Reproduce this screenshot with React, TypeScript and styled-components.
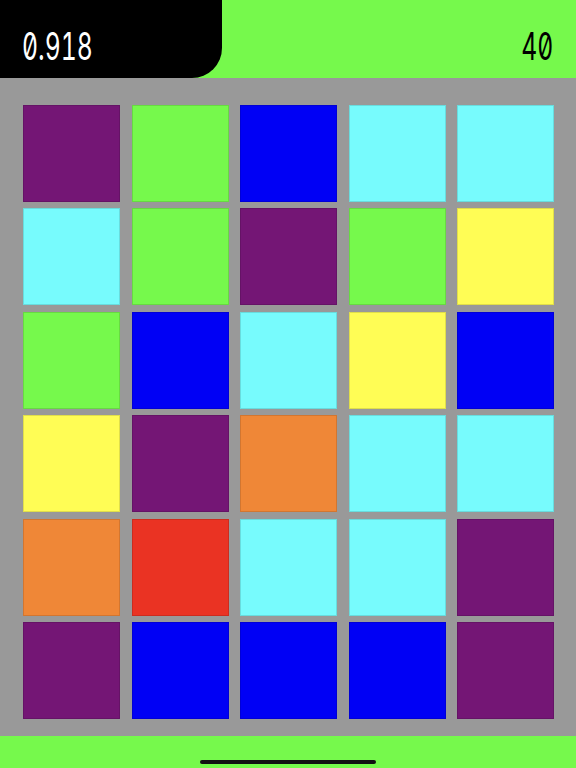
import React from 'react';
import styled, { createGlobalStyle } from 'styled-components';

const GlobalStyle = createGlobalStyle`
  html, body {
    margin: 0;
    padding: 0;
    background: #999999;
  }
  body {
    font-family: Inter, "DejaVu Sans", sans-serif;
  }
`;

const colors: Record<string, string> = {
  P: '#741675',
  G: '#76f94c',
  B: '#0000f5',
  C: '#77fbfd',
  Y: '#fffd55',
  O: '#ef8737',
  R: '#ea3323',
};

const board = [
  'PGBCC',
  'CGPGY',
  'GBCYB',
  'YPOCC',
  'ORCCP',
  'PBBBP',
];

function App() {
  return (
    <>
      <GlobalStyle />
      <Screen>
        <Header>
          <Timer>
            <Num>0.918</Num>
          </Timer>
          <Score>
            <Num>40</Num>
          </Score>
        </Header>
        <Board>
          <Grid>
            {board.map((row, r) =>
              row.split('').map((c, i) => <Tile key={r + '-' + i} color={colors[c]} />)
            )}
          </Grid>
        </Board>
        <Footer>
          <HomeBar />
        </Footer>
      </Screen>
    </>
  );
}

export default App;

const Screen = styled.div`
  width: 576px;
  height: 768px;
  display: flex;
  flex-direction: column;
  overflow: hidden;
`;

const Header = styled.div`
  height: 78px;
  background: #76f94c;
  display: flex;
  justify-content: space-between;
  align-items: stretch;
`;

const Timer = styled.div`
  width: 222px;
  background: #000;
  border-bottom-right-radius: 30px;
  color: #fff;
  display: flex;
  align-items: center;
  padding-left: 22px;
  box-sizing: border-box;
  padding-top: 13px;
`;

const Score = styled.div`
  color: #000;
  display: flex;
  align-items: center;
  padding-right: 23px;
  padding-top: 13px;
`;

const Num = styled.span`
  display: inline-block;
  font-family: Inter, "DejaVu Sans", sans-serif;
  font-feature-settings: "zero" 1, "tnum" 1;
  font-size: 38px;
  font-weight: 400;
  letter-spacing: 0;
  transform: scaleX(0.65);
  transform-origin: left center;
  line-height: 1;
  ${Score} & {
    transform-origin: right center;
  }
`;

const Board = styled.div`
  flex: 1;
  background: #999999;
  padding: 27px 23px 0 23px;
`;

const Grid = styled.div`
  display: grid;
  grid-template-columns: repeat(5, 97px);
  grid-auto-rows: 97px;
  column-gap: 11.5px;
  row-gap: 6.4px;
`;

const Tile = styled.div<{ color: string }>`
  background: ${(p) => p.color};
  box-shadow: inset 0 0 0 1px rgba(0, 0, 0, 0.12);
`;

const Footer = styled.div`
  height: 32px;
  background: #76f94c;
  display: flex;
  justify-content: center;
  align-items: flex-start;
  padding-top: 24px;
  box-sizing: border-box;
`;

const HomeBar = styled.div`
  width: 176px;
  height: 4px;
  border-radius: 2px;
  background: #111;
`;
